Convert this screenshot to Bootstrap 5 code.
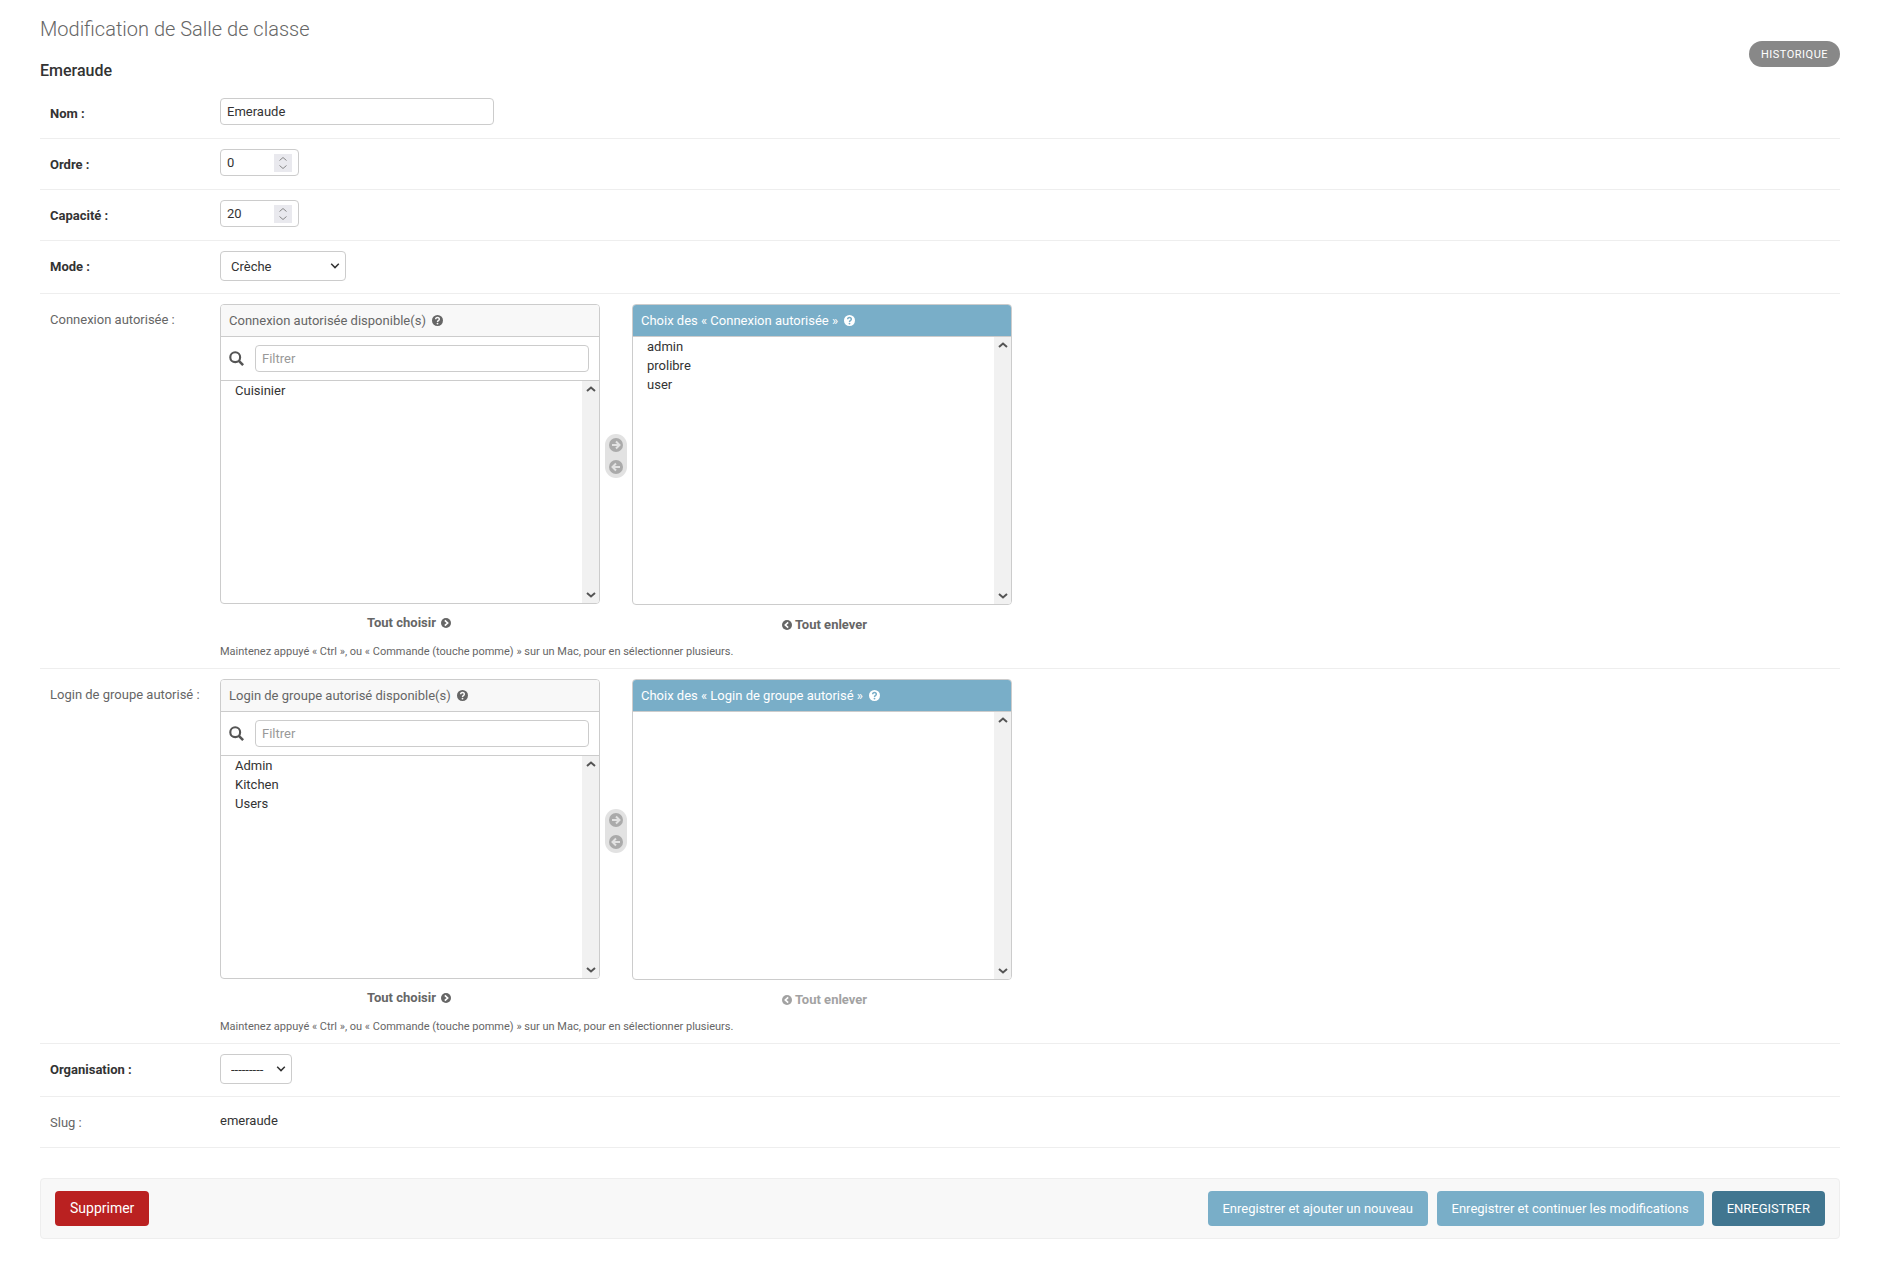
<!DOCTYPE html>
<html lang="fr">
<head>
<meta charset="utf-8">
<title>Modification de Salle de classe</title>
<link rel="stylesheet" href="https://cdn.jsdelivr.net/npm/bootstrap@5.3.0/dist/css/bootstrap.min.css">
<style>
html,body{background:#fff}
body{font-family:Roboto,"Liberation Sans",sans-serif;font-size:13px;line-height:20px;color:#333}
.page-wrap{padding:17px 39px 33px 40px}
.page-title{font-size:20px;line-height:24px;font-weight:300;color:#666;margin:0}
.set-title{font-size:16px;line-height:20px;font-weight:500;color:#333;margin:20px 0 7px}
.hist-pill{display:block;margin-top:24px;height:26px;line-height:27px;width:91px;text-align:center;background:#888;color:#fff;border-radius:15px;font-size:11px;letter-spacing:.5px;text-transform:uppercase;text-decoration:none}
.f-row{display:flex;padding:10px 0;border-bottom:1px solid #eee}
.f-label{flex:0 0 180px;padding:6px 0 0 10px;color:#666}
.f-label.req{font-weight:700;color:#333}
.f-in{height:27px;padding:0 6px;font-size:13px;line-height:25px;color:#333;border:1px solid #ccc;border-radius:4px;box-shadow:none;min-height:0}
.in-text{width:274px}
.in-num{width:79px}
.in-num::-webkit-inner-spin-button{-webkit-appearance:none;appearance:none;opacity:1;width:18px;height:18px;background:#e9e9ee url("data:image/svg+xml,%3Csvg xmlns='http://www.w3.org/2000/svg' width='18' height='18'%3E%3Cpath d='M5.5 6.5 9 3.5l3.5 3M5.5 11.5 9 14.5l3.5-3' fill='none' stroke='%23888' stroke-width='1'/%3E%3C/svg%3E") center no-repeat}
.tall-row{padding-bottom:13px}
.sel-row{padding-bottom:12px}
.form-select.nat-sel{display:block;height:30px;min-height:0;font-size:13px;line-height:28px;color:#333;background-color:#fff;background-image:url("data:image/svg+xml,%3Csvg xmlns='http://www.w3.org/2000/svg' width='10' height='8'%3E%3Cpath d='M1.2 1.8 5 5.6l3.8-3.8' fill='none' stroke='%23333' stroke-width='1.5'/%3E%3C/svg%3E");background-size:10px 8px;background-position:right 5px center;border:1px solid #ccc;border-radius:4px;padding:1px 18px 0 10px;box-shadow:none}
.sel-mode{width:126px}
.sel-org{width:72px}
.sl-col{flex:0 0 380px}
.sl-box{border:1px solid #ccc;border-radius:4px;height:300px;display:flex;flex-direction:column;overflow:hidden}
.sl-box.right-box{height:301px}
.sl-head{height:32px;flex:none;line-height:34px;padding:0 8px;background:#f8f8f8;color:#666;border-bottom:1px solid #ccc;display:flex;align-items:center;gap:6px}
.right-box .sl-head{background:#79aec8;color:#fff;border-bottom:1px solid #ccc}
.sl-filter{height:44px;flex:none;border-bottom:1px solid #ccc;display:flex;align-items:center;padding:0 10px 0 8px;gap:11px}
.sl-filter .f-in{flex:1;width:auto;height:27px}
.sl-filter .f-in::placeholder{color:#999}
.sl-list{flex:1;display:flex;min-height:0}
.sl-items{flex:1;list-style:none;margin:0;padding:0 0 0 14px;line-height:19px;color:#333}
.sl-bar{flex:0 0 17px;background:#f1f1f1;display:flex;flex-direction:column;justify-content:space-between;align-items:center;padding:5px 0}
.sl-move{flex:0 0 32px;display:flex;justify-content:center}
.move-pill{width:22px;height:44px;margin-top:130px;background:#e2e2e2;border-radius:11px;display:flex;flex-direction:column;align-items:center;justify-content:space-between;padding:4px 0}
.sl-act{display:flex;justify-content:center;align-items:center;gap:5px;height:20px;margin-top:9px;padding-right:2px;font-weight:700;color:#666;text-decoration:none}
.right-col .sl-act{margin-top:10px;gap:3px;padding:0 0 0 5px}
.sl-act.off{opacity:.6}
.f-help{font-size:11px;line-height:16px;color:#666;margin-top:9px}
.sel-block{padding-bottom:8px}
.slug-val{line-height:20px;padding-top:4px;color:#333}
.f-row.slug-row{padding-bottom:14px}
.submit-bar{margin-top:30px;padding:12px 14px;background:#f8f8f8;border:1px solid #eee;border-radius:4px}
.act-btn{height:35px;padding:0 15px;font-size:13px;line-height:35px;border:0;border-radius:4px;color:#fff}
.act-del{background:#ba2121;font-size:14px}
.act-del:hover{background:#ba2121;color:#fff}
.act-sec{background:#79aec8}
.act-sec:hover{background:#79aec8;color:#fff}
.act-sec.act-first{padding:0 14.5px;margin-right:9px}
.act-main{background:#417690}
.act-main:hover{background:#417690;color:#fff}
.ic{flex:none;display:block}
.symbols{display:none}
</style>
</head>
<body>
<svg class="symbols" xmlns="http://www.w3.org/2000/svg">
  <symbol id="i-help" viewBox="0 0 12 12"><circle cx="6" cy="6" r="6" fill="currentColor"/><path d="M4 4.7c0-2.6 4-2.6 4 0 0 1.5-2 1.4-2 2.8" fill="none" stroke="var(--ic-bg,#f8f8f8)" stroke-width="1.6"/><circle cx="6" cy="9.4" r="1" fill="var(--ic-bg,#f8f8f8)"/></symbol>
  <symbol id="i-right" viewBox="0 0 14 14"><circle cx="7" cy="7" r="7" fill="#aaa"/><path d="M3 7h7M7 3.5 10.5 7 7 10.5" fill="none" stroke="#e2e2e2" stroke-width="2"/></symbol>
  <symbol id="i-left" viewBox="0 0 14 14"><circle cx="7" cy="7" r="7" fill="#aaa"/><path d="M11 7H4M7 3.5 3.5 7 7 10.5" fill="none" stroke="#e2e2e2" stroke-width="2"/></symbol>
  <symbol id="i-cr" viewBox="0 0 12 12"><circle cx="6" cy="6" r="6" fill="currentColor"/><path d="M4.6 2.8 8 6 4.6 9.2" fill="none" stroke="#fff" stroke-width="2"/></symbol>
  <symbol id="i-cl" viewBox="0 0 12 12"><circle cx="6" cy="6" r="6" fill="currentColor"/><path d="M7.4 2.8 4 6l3.4 3.2" fill="none" stroke="#fff" stroke-width="2"/></symbol>
  <symbol id="i-up" viewBox="0 0 10 6"><path d="M1 5 5 1.5 9 5" fill="none" stroke="#555" stroke-width="2"/></symbol>
  <symbol id="i-down" viewBox="0 0 10 6"><path d="M1 1 5 4.5 9 1" fill="none" stroke="#555" stroke-width="2"/></symbol>
  <symbol id="i-search" viewBox="0 0 14 14"><circle cx="5.8" cy="5.8" r="4.6" fill="none" stroke="#555" stroke-width="2"/><path d="m9.2 9.2 4 4" stroke="#555" stroke-width="2.4"/></symbol>
</svg>

<div class="page-wrap">
  <div class="d-flex justify-content-between align-items-start">
    <div>
      <h1 class="page-title">Modification de Salle de classe</h1>
      <h2 class="set-title">Emeraude</h2>
    </div>
    <a class="hist-pill" href="#">Historique</a>
  </div>

  <form onsubmit="return false">
    <div class="f-row tall-row">
      <label class="f-label req">Nom :</label>
      <input class="form-control f-in in-text" type="text" value="Emeraude">
    </div>
    <div class="f-row tall-row">
      <label class="f-label req">Ordre :</label>
      <input class="form-control f-in in-num" type="number" value="0">
    </div>
    <div class="f-row tall-row">
      <label class="f-label req">Capacité :</label>
      <input class="form-control f-in in-num" type="number" value="20">
    </div>
    <div class="f-row sel-row">
      <label class="f-label req">Mode :</label>
      <select class="form-select nat-sel sel-mode"><option>Crèche</option></select>
    </div>

    <div class="f-row sel-block">
      <label class="f-label">Connexion autorisée :</label>
      <div>
        <div class="d-flex">
          <div class="sl-col">
            <div class="sl-box">
              <div class="sl-head">Connexion autorisée disponible(s) <svg class="ic" width="11" height="11"><use href="#i-help"/></svg></div>
              <div class="sl-filter"><svg class="ic" width="15" height="15"><use href="#i-search"/></svg><input class="form-control f-in" type="text" placeholder="Filtrer"></div>
              <div class="sl-list">
                <ul class="sl-items"><li>Cuisinier</li></ul>
                <div class="sl-bar"><svg class="ic" width="10" height="6"><use href="#i-up"/></svg><svg class="ic" width="10" height="6"><use href="#i-down"/></svg></div>
              </div>
            </div>
            <a class="sl-act" href="#">Tout choisir <svg class="ic" width="10" height="10"><use href="#i-cr"/></svg></a>
          </div>
          <div class="sl-move"><div class="move-pill"><svg class="ic" width="14" height="14"><use href="#i-right"/></svg><svg class="ic" width="14" height="14"><use href="#i-left"/></svg></div></div>
          <div class="sl-col right-col">
            <div class="sl-box right-box">
              <div class="sl-head">Choix des « Connexion autorisée » <svg class="ic" width="11" height="11" style="--ic-bg:#79aec8"><use href="#i-help"/></svg></div>
              <div class="sl-list">
                <ul class="sl-items"><li>admin</li><li>prolibre</li><li>user</li></ul>
                <div class="sl-bar"><svg class="ic" width="10" height="6"><use href="#i-up"/></svg><svg class="ic" width="10" height="6"><use href="#i-down"/></svg></div>
              </div>
            </div>
            <a class="sl-act" href="#"><svg class="ic" width="10" height="10"><use href="#i-cl"/></svg> Tout enlever</a>
          </div>
        </div>
        <div class="f-help">Maintenez appuyé « Ctrl », ou « Commande (touche pomme) » sur un Mac, pour en sélectionner plusieurs.</div>
      </div>
    </div>

    <div class="f-row sel-block">
      <label class="f-label">Login de groupe autorisé :</label>
      <div>
        <div class="d-flex">
          <div class="sl-col">
            <div class="sl-box">
              <div class="sl-head">Login de groupe autorisé disponible(s) <svg class="ic" width="11" height="11"><use href="#i-help"/></svg></div>
              <div class="sl-filter"><svg class="ic" width="15" height="15"><use href="#i-search"/></svg><input class="form-control f-in" type="text" placeholder="Filtrer"></div>
              <div class="sl-list">
                <ul class="sl-items"><li>Admin</li><li>Kitchen</li><li>Users</li></ul>
                <div class="sl-bar"><svg class="ic" width="10" height="6"><use href="#i-up"/></svg><svg class="ic" width="10" height="6"><use href="#i-down"/></svg></div>
              </div>
            </div>
            <a class="sl-act" href="#">Tout choisir <svg class="ic" width="10" height="10"><use href="#i-cr"/></svg></a>
          </div>
          <div class="sl-move"><div class="move-pill"><svg class="ic" width="14" height="14"><use href="#i-right"/></svg><svg class="ic" width="14" height="14"><use href="#i-left"/></svg></div></div>
          <div class="sl-col right-col">
            <div class="sl-box right-box">
              <div class="sl-head">Choix des « Login de groupe autorisé » <svg class="ic" width="11" height="11" style="--ic-bg:#79aec8"><use href="#i-help"/></svg></div>
              <div class="sl-list">
                <ul class="sl-items"></ul>
                <div class="sl-bar"><svg class="ic" width="10" height="6"><use href="#i-up"/></svg><svg class="ic" width="10" height="6"><use href="#i-down"/></svg></div>
              </div>
            </div>
            <a class="sl-act off" href="#"><svg class="ic" width="10" height="10"><use href="#i-cl"/></svg> Tout enlever</a>
          </div>
        </div>
        <div class="f-help">Maintenez appuyé « Ctrl », ou « Commande (touche pomme) » sur un Mac, pour en sélectionner plusieurs.</div>
      </div>
    </div>

    <div class="f-row sel-row">
      <label class="f-label req">Organisation :</label>
      <select class="form-select nat-sel sel-org"><option>---------</option></select>
    </div>
    <div class="f-row slug-row">
      <label class="f-label">Slug :</label>
      <div class="slug-val">emeraude</div>
    </div>

    <div class="submit-bar d-flex justify-content-between align-items-center">
      <button class="btn act-btn act-del">Supprimer</button>
      <div class="d-flex">
        <button class="btn act-btn act-sec act-first">Enregistrer et ajouter un nouveau</button>
        <button class="btn act-btn act-sec me-2">Enregistrer et continuer les modifications</button>
        <button class="btn act-btn act-main">ENREGISTRER</button>
      </div>
    </div>
  </form>
</div>
<script src="https://cdn.jsdelivr.net/npm/bootstrap@5.3.0/dist/js/bootstrap.bundle.min.js"></script>
</body>
</html>
